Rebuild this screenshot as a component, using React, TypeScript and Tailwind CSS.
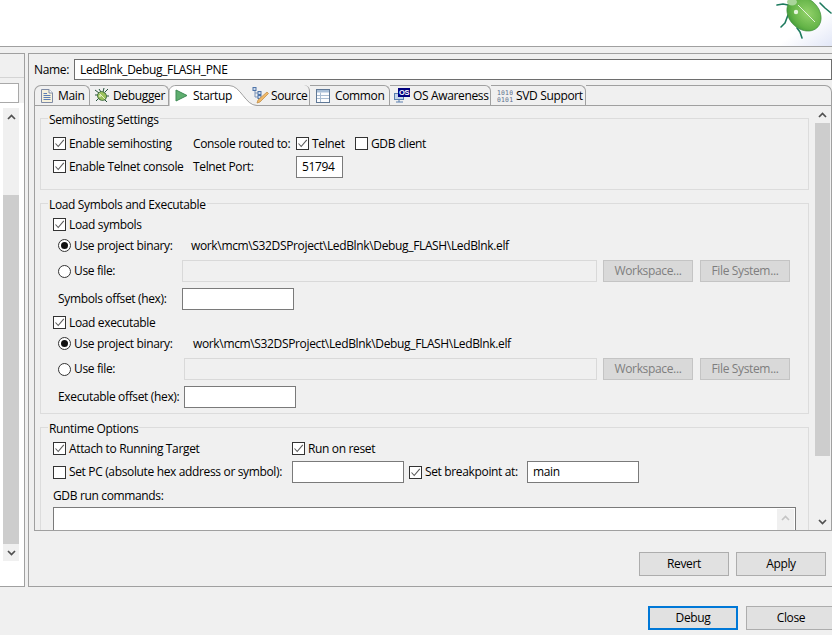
import type { ReactNode } from "react";

const Check = ({ on = true }: { on?: boolean }) => (
  <span className="flex h-[13px] w-[13px] shrink-0 items-center justify-center border border-[#333] bg-white">
    {on && (
      <svg width="11" height="11" viewBox="0 0 11 11" fill="none">
        <path d="M1.5 5.5 L4.2 8.5 L9.8 1.8" stroke="#5a5a5a" strokeWidth="1.1" />
      </svg>
    )}
  </span>
);

const Radio = ({ on = false }: { on?: boolean }) => (
  <span className="flex h-[13px] w-[13px] shrink-0 items-center justify-center rounded-full border border-[#333] bg-white">
    {on && <span className="h-[7px] w-[7px] rounded-full bg-[#111]" />}
  </span>
);

const CheckLabel = ({ text, on = true, className = "" }: { text: string; on?: boolean; className?: string }) => (
  <div className={`flex items-center gap-[3px] ${className}`}>
    <Check on={on} />
    <span className="whitespace-nowrap">{text}</span>
  </div>
);

const TextBox = ({ className = "", children }: { className?: string; children?: ReactNode }) => (
  <div className={`flex h-[22px] shrink-0 items-center border border-[#7a7a7a] bg-white pl-[5px] ${className}`}>{children}</div>
);

const Btn = ({ text, kind = "normal", className = "" }: { text: string; kind?: "normal" | "disabled" | "focus"; className?: string }) => {
  const look =
    kind === "disabled"
      ? "h-[22px] border border-[#c4c4c4] bg-[#d9d9d9] text-[#7e7e7e]"
      : kind === "focus"
        ? "h-[24px] border-2 border-[#0078d7] bg-[#e1e1e1]"
        : "h-[24px] border border-[#adadad] bg-[#e1e1e1]";
  return <div className={`flex w-[90px] shrink-0 items-center justify-center ${look} ${className}`}>{text}</div>;
};

const Group = ({ title, className = "", children }: { title: string; className?: string; children: ReactNode }) => (
  <div className={`ml-[5px] w-[769px] shrink-0 border border-[#dcdcdc] ${className}`}>
    <div className="absolute ml-[7px] -mt-[7px] h-[15px] bg-[#f0f0f0] px-px leading-[15px]">{title}</div>
    {children}
  </div>
);

const ScrollArrow = ({ up, color = "#505050" }: { up?: boolean; color?: string }) => (
  <svg width="9" height="6" viewBox="0 0 9 6" fill="none">
    <path d={up ? "M1 5 L4.5 1.5 L8 5" : "M1 1 L4.5 4.5 L8 1"} stroke={color} strokeWidth="1.7" />
  </svg>
);

const DocIcon = () => (
  <svg width="12" height="14" viewBox="0 0 12 14" className="shrink-0">
    <path d="M0.5 0.5 H8 L11.5 4 V13.5 H0.5 Z" fill="#f6f1dc" stroke="#7f8ba5" />
    <path d="M8 0.5 V4 H11.5" fill="#fff" stroke="#7f8ba5" />
    <path d="M2.5 4.5 H6 M2.5 6.5 H9.5 M2.5 8.5 H9.5 M2.5 10.5 H9.5" stroke="#5c7fb5" />
  </svg>
);

const SmallBug = () => (
  <svg width="16" height="15" viewBox="0 0 16 15" className="shrink-0">
    <path d="M1 2 L5 5 M1 7 H4 M2 13 L5 10 M14 1 L11 4 M15 8 H12 M13 14 L10 11 M5 1 L7 4 M10 0 L9 4" stroke="#24513a" strokeWidth="1" />
    <ellipse cx="8" cy="8" rx="4.6" ry="4.2" transform="rotate(40 8 8)" fill="#9cc25d" stroke="#3f6e3c" />
    <path d="M5.5 5.5 L11 11" stroke="#e8f2c8" />
    <circle cx="6" cy="8" r="1" fill="#e4efc4" />
  </svg>
);

const PlayIcon = () => (
  <svg width="13" height="13" viewBox="0 0 13 13" className="shrink-0">
    <path d="M1 1 L12 6.5 L1 12 Z" fill="#5fae6f" stroke="#3e8a55" />
  </svg>
);

const SourceIcon = () => (
  <svg width="17" height="17" viewBox="0 0 17 17" className="shrink-0">
    <path d="M3 2 V10 H6 M3 6 H6" stroke="#7a93b8" fill="none" />
    <rect x="1" y="0.5" width="3" height="3" fill="#cfdcee" stroke="#4f74a8" />
    <rect x="6" y="4.5" width="3" height="3" fill="#cfdcee" stroke="#4f74a8" />
    <rect x="6" y="8.5" width="3" height="3" fill="#cfdcee" stroke="#4f74a8" />
    <path d="M15 5 L16.5 6.5 L8 15 L5 16 L6 13 Z" fill="#f0b96a" stroke="#c4914a" strokeWidth="0.8" />
  </svg>
);

const TableIcon = () => (
  <svg width="14" height="14" viewBox="0 0 14 14" className="shrink-0">
    <rect x="0.5" y="0.5" width="13" height="13" fill="#fbfcfe" stroke="#5f7896" />
    <path d="M1 1 H13 V3.5 H1 Z" fill="#a9bfd8" />
    <path d="M4.5 3.5 V13 M1 6.5 H13 M1 9.5 H13" stroke="#a9bcd2" />
  </svg>
);

const OsIcon = () => (
  <svg width="16" height="15" viewBox="0 0 16 15" className="shrink-0">
    <rect x="0.5" y="5.5" width="9" height="6" fill="#c5d6ea" stroke="#5b7fae" />
    <path d="M2 14 H9 M5 11.5 V14" stroke="#5b7fae" />
    <rect x="4" y="0" width="12" height="9" fill="#00007f" />
    <text x="10" y="7.4" textAnchor="middle" fontSize="7.5" fontWeight="700" fill="#fff" fontFamily="'Liberation Sans', sans-serif">
      OS
    </text>
  </svg>
);

const BinIcon = () => (
  <svg width="16" height="14" viewBox="0 0 16 14" className="shrink-0">
    <text x="0" y="6" fontSize="6.4" fill="#5c6f8c" fontFamily="'DejaVu Sans Mono', monospace" letterSpacing="0.2">
      1010
    </text>
    <text x="0" y="13" fontSize="6.4" fill="#5c6f8c" fontFamily="'DejaVu Sans Mono', monospace" letterSpacing="0.2">
      0101
    </text>
  </svg>
);

const BugLogo = () => (
  <svg width="62" height="46" viewBox="0 0 62 46" className="block">
    <defs>
      <linearGradient id="wash" x1="0.2" y1="0.1" x2="1" y2="1">
        <stop offset="0.5" stopColor="#ffffff" />
        <stop offset="1" stopColor="#e2e7f7" />
      </linearGradient>
      <radialGradient id="shell" cx="0.55" cy="0.4" r="0.75">
        <stop offset="0" stopColor="#98d66e" />
        <stop offset="0.6" stopColor="#66b548" />
        <stop offset="1" stopColor="#2f8a30" />
      </radialGradient>
      <pattern id="dots" width="2" height="2" patternUnits="userSpaceOnUse">
        <circle cx="1" cy="1" r="0.4" fill="#2f7d2c" opacity="0.35" />
      </pattern>
    </defs>
    <rect width="62" height="46" fill="url(#wash)" />
    <g fill="none" stroke="#1d7a5e" strokeWidth="1.6" strokeLinecap="round" strokeLinejoin="round">
      <path d="M18 5 L13 4 L7 5" />
      <path d="M18 15 L15 23 L11 27" />
      <path d="M27 28 L30 32 L32 38" />
      <path d="M50 3 L55 8 L61 13" />
    </g>
    <ellipse cx="34" cy="14" rx="19" ry="15" transform="rotate(45 34 14)" fill="url(#shell)" stroke="#3b8a3c" strokeWidth="0.6" />
    <ellipse cx="34" cy="14" rx="19" ry="15" transform="rotate(45 34 14)" fill="url(#dots)" />
    <path d="M28 5 L45 22" stroke="#e4f4dc" strokeWidth="1" />
    <circle cx="26" cy="12" r="2.2" fill="#e4f4dc" />
    <ellipse cx="22" cy="2" rx="5" ry="3.5" fill="#a9d59a" />
  </svg>
);

const Tab = ({ w, icon, iconPad, text, className = "" }: { w: string; icon: ReactNode; iconPad: string; text: string; className?: string }) => (
  <div className={`flex h-[20px] shrink-0 items-center rounded-tr-[6px] border-t border-r border-[#a0a0a0] ${w} ${iconPad} ${className}`}>
    {icon}
    <span className="whitespace-nowrap">{text}</span>
  </div>
);

const App = () => {
  return (
    <div className="flex h-[635px] w-[832px] flex-col overflow-hidden bg-[#f0f0f0] font-['Open_Sans',sans-serif] text-[12px] tracking-[-0.35px] text-black">
      <div className="flex h-[47px] shrink-0 justify-end border-b border-[#a0a0a0] bg-white">
        <BugLogo />
      </div>

      <div className="mt-[6px] flex h-[534px] shrink-0 gap-[3px]">
        {/* left list panel */}
        <div className="flex w-[25px] shrink-0 flex-col border-t border-r border-b border-[#a0a0a0]">
          <div className="h-[24px] shrink-0 border-b border-[#d4d4d4]" />
          <div className="mt-[5px] h-[20px] w-[19px] shrink-0 border border-l-0 border-[#a9a9a9] bg-white" />
          <div className="flex-1 bg-white pt-[5px] pl-[3px]">
            <div className="flex h-[453px] w-[16px] flex-col items-center bg-[#f0f0f0]">
              <div className="flex h-[17px] items-center">
                <ScrollArrow up />
              </div>
              <div className="mt-[70px] h-[349px] w-full bg-[#cdcdcd]" />
              <div className="flex flex-1 items-center">
                <ScrollArrow />
              </div>
            </div>
          </div>
        </div>

        {/* launch configuration panel */}
        <div className="flex min-w-0 flex-1 flex-col border-t border-b border-l border-[#a0a0a0] pl-[5px]">
          <div className="mt-[5px] flex h-[21px] shrink-0 items-center">
            <span className="w-[40px]">Name:</span>
            <div className="flex h-[21px] w-[758px] items-center border border-[#6e6e6e] bg-white pl-[5px]">LedBlnk_Debug_FLASH_PNE</div>
          </div>

          <div className="mt-[5px] flex h-[446px] w-[798px] shrink-0 flex-col">
            <div className="relative flex h-[21px] shrink-0 border-b border-[#a0a0a0]">
              <Tab w="w-[56px]" iconPad="pl-[6px] gap-[5px]" icon={<DocIcon />} text="Main" className="rounded-tl-[7px] border-l" />
              <Tab w="w-[79px]" iconPad="pl-[4px] gap-[3px]" icon={<SmallBug />} text="Debugger" />
              <div className="relative z-10 flex h-[21px] w-[76px] shrink-0 items-center gap-[5px] pl-[6px]">
                <svg width="92" height="22" viewBox="0 0 92 22" className="absolute top-0 left-0 -z-10" fill="none">
                  <path d="M0 21 V7 C0 3 3 0.5 7 0.5 H60 C72 0.5 76 20.5 88 20.5 L88 21 Z" fill="#fff" />
                  <path d="M0 21 V7 C0 3 3 0.5 7 0.5 H60 C72 0.5 76 20.5 88 20.5 H92" stroke="#a0a0a0" />
                </svg>
                <PlayIcon />
                <span className="whitespace-nowrap">Startup</span>
              </div>
              <Tab w="w-[65px]" iconPad="pl-[7px] pt-px gap-[2px]" icon={<SourceIcon />} text="Source" className="z-20 border-t-0" />
              <Tab w="w-[80px]" iconPad="pl-[6px] gap-[5px]" icon={<TableIcon />} text="Common" />
              <Tab w="w-[101px]" iconPad="pl-[4px] gap-[3px]" icon={<OsIcon />} text="OS Awareness" />
              <Tab w="w-[95px]" iconPad="pl-[6px] gap-[3px]" icon={<BinIcon />} text="SVD Support" />
              <div className="h-[20px] flex-1 rounded-tr-[7px] border-t border-r border-[#a0a0a0]" />
            </div>

            <div className="flex min-h-0 flex-1 border-r border-b border-l border-[#a0a0a0]">
              <div className="flex w-[780px] shrink-0 flex-col overflow-hidden pt-[12px]">
                <Group title="Semihosting Settings" className="h-[72px]">
                  <div className="mt-[13px] flex h-[23px] items-center pl-[12px]">
                    <CheckLabel text="Enable semihosting" className="w-[140px]" />
                    <span className="w-[103px] whitespace-nowrap">Console routed to:</span>
                    <CheckLabel text="Telnet" className="w-[59px]" />
                    <CheckLabel text="GDB client" on={false} />
                  </div>
                  <div className="flex h-[23px] items-center pl-[12px]">
                    <CheckLabel text="Enable Telnet console" className="w-[140px]" />
                    <span className="w-[103px]">Telnet Port:</span>
                    <TextBox className="w-[47px]">51794</TextBox>
                  </div>
                </Group>

                <Group title="Load Symbols and Executable" className="mt-[13px] h-[211px]">
                  <div className="mt-[10px] flex h-[21px] items-center pl-[12px]">
                    <CheckLabel text="Load symbols" />
                  </div>
                  <div className="flex h-[21px] items-center pl-[17px]">
                    <Radio on />
                    <span className="ml-[3px] w-[117px] whitespace-nowrap">Use project binary:</span>
                    <span className="whitespace-nowrap">work\mcm\S32DSProject\LedBlnk\Debug_FLASH\LedBlnk.elf</span>
                  </div>
                  <div className="mt-[4px] flex h-[22px] items-center pl-[17px]">
                    <Radio />
                    <span className="ml-[3px] w-[108px]">Use file:</span>
                    <div className="h-[22px] w-[415px] border border-[#d9d9d9] bg-[#f0f0f0]" />
                    <Btn text="Workspace..." kind="disabled" className="ml-[6px]" />
                    <Btn text="File System..." kind="disabled" className="ml-[7px]" />
                  </div>
                  <div className="mt-[6px] flex h-[22px] items-center pl-[17px]">
                    <span className="w-[124px]">Symbols offset (hex):</span>
                    <TextBox className="w-[112px]" />
                  </div>
                  <div className="mt-[2px] flex h-[21px] items-center pl-[12px]">
                    <CheckLabel text="Load executable" />
                  </div>
                  <div className="flex h-[21px] items-center pl-[17px]">
                    <Radio on />
                    <span className="ml-[3px] w-[119px] whitespace-nowrap">Use project binary:</span>
                    <span className="whitespace-nowrap">work\mcm\S32DSProject\LedBlnk\Debug_FLASH\LedBlnk.elf</span>
                  </div>
                  <div className="mt-[4px] flex h-[22px] items-center pl-[17px]">
                    <Radio />
                    <span className="ml-[3px] w-[110px]">Use file:</span>
                    <div className="h-[22px] w-[413px] border border-[#d9d9d9] bg-[#f0f0f0]" />
                    <Btn text="Workspace..." kind="disabled" className="ml-[6px]" />
                    <Btn text="File System..." kind="disabled" className="ml-[7px]" />
                  </div>
                  <div className="mt-[6px] flex h-[22px] items-center pl-[17px]">
                    <span className="w-[126px] whitespace-nowrap">Executable offset (hex):</span>
                    <TextBox className="w-[112px]" />
                  </div>
                </Group>

                <Group title="Runtime Options" className="mt-[13px] h-[200px]">
                  <div className="mt-[10px] flex h-[21px] items-center pl-[12px]">
                    <CheckLabel text="Attach to Running Target" className="w-[239px]" />
                    <CheckLabel text="Run on reset" />
                  </div>
                  <div className="mt-[2px] flex h-[22px] items-center pl-[12px]">
                    <CheckLabel text="Set PC (absolute hex address or symbol):" on={false} className="w-[239px]" />
                    <TextBox className="w-[112px]" />
                    <CheckLabel text="Set breakpoint at:" className="ml-[5px] w-[118px]" />
                    <TextBox className="w-[112px]">main</TextBox>
                  </div>
                  <div className="mt-[2px] flex h-[21px] items-center pl-[12px]">GDB run commands:</div>
                  <div className="mt-px ml-[12px] flex h-[40px] w-[743px] justify-end border border-[#7a7a7a] bg-white pt-px pr-px">
                    <div className="flex h-[30px] w-[17px] justify-center bg-[#f0f0f0] pt-[6px]">
                      <ScrollArrow up color="#c4c4c4" />
                    </div>
                  </div>
                </Group>
              </div>

              {/* outer scrollbar */}
              <div className="flex w-[15px] shrink-0 flex-col items-center bg-[#f0f0f0]">
                <div className="flex h-[17px] items-center">
                  <ScrollArrow up />
                </div>
                <div className="h-[333px] w-full bg-[#cdcdcd]" />
                <div className="flex-1" />
                <div className="flex h-[17px] items-center">
                  <ScrollArrow />
                </div>
              </div>
            </div>
          </div>

          <div className="mt-[21px] flex w-[792px] shrink-0 justify-end gap-[7px]">
            <Btn text="Revert" />
            <Btn text="Apply" />
          </div>
        </div>
      </div>

      <div className="mt-[19px] flex shrink-0 gap-[8px] pl-[648px]">
        <Btn text="Debug" kind="focus" />
        <Btn text="Close" />
      </div>
    </div>
  );
};

export default App;
